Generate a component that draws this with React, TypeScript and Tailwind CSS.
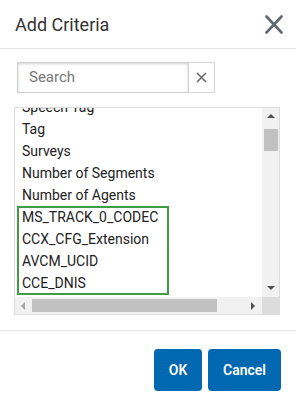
import React from 'react';

const font = { fontFamily: 'Roboto, "Liberation Sans", Arial, sans-serif' };

// items visible in the criteria list (first one is scrolled half out of view)
const before = ['Speech Tag', 'Tag', 'Surveys', 'Number of Segments', 'Number of Agents'];
const picked = ['MS_TRACK_0_CODEC', 'CCX_CFG_Extension', 'AVCM_UCID', 'CCE_DNIS'];

const Row: React.FC<{ text: string }> = ({ text }) => (
  <div className="h-[22px] leading-[22px] pl-[7px] whitespace-nowrap text-[14px] text-[#222]">{text}</div>
);

const Arrow: React.FC<{ dir: 'up' | 'down' | 'left' | 'right'; light?: boolean }> = ({ dir, light }) => {
  const pts = {
    up: '1,6 5,2 9,6',
    down: '1,2 5,6 9,2',
    left: '6,1 2,5 6,9',
    right: '2,1 6,5 2,9',
  }[dir];
  return (
    <svg width="10" height="10" viewBox="0 0 10 10" className="block">
      <polygon points={pts} fill={light ? '#a3a3a3' : '#505050'} />
    </svg>
  );
};

const App: React.FC = () => {
  return (
    <div className="w-[296px] h-[406px] bg-white flex flex-col" style={font}>
      {/* header */}
      <div className="h-[49px] border-b border-[#e3e3e3] flex items-center justify-between pl-[15px] pr-[13px]">
        <h2 className="text-[18px] text-[#333] font-normal">Add Criteria</h2>
        <button className="w-[18px] h-[20px] flex items-center justify-center">
          <svg width="18" height="19" viewBox="0 0 18 19">
            <path d="M1.5 1.5 L16.5 17.5 M16.5 1.5 L1.5 17.5" stroke="#5e6a71" strokeWidth="2.6" strokeLinecap="round" />
          </svg>
        </button>
      </div>

      {/* body */}
      <div className="pt-[13px] pl-[14px] pr-[17px]">
        <div className="ml-[3px] w-[198px] h-[31px] flex">
          <div className="flex-1 border border-[#d0d0d0] shadow-[inset_0_1px_3px_rgba(0,0,0,0.18)] flex items-center pl-[11px] text-[15px] text-[#777]">
            Search
          </div>
          <button className="w-[26px] border border-l-0 border-[#d6d6d6] flex items-center justify-center">
            <svg width="11" height="11" viewBox="0 0 11 11">
              <path d="M1 1 L10 10 M10 1 L1 10" stroke="#666" strokeWidth="1.5" />
            </svg>
          </button>
        </div>

        <div className="mt-[14px] w-[266px] h-[208px] border border-[#dcdcdc] flex flex-col">
          <div className="flex flex-1 min-h-0">
            <div className="relative flex-1 overflow-hidden">
              <div className="-mt-[12px]">
                {before.map((t) => (
                  <Row key={t} text={t} />
                ))}
                {picked.map((t) => (
                  <Row key={t} text={t} />
                ))}
              </div>
              {/* highlight box around the newly added fields */}
              <div className="absolute left-[2px] top-[98px] w-[152px] h-[89px] border-2 border-[#3f9c45]" />
            </div>
            <div className="w-[17px] bg-[#f1f1f1] flex flex-col items-center">
              <div className="h-[17px] flex items-center justify-center">
                <Arrow dir="up" />
              </div>
              <div className="mt-[4px] w-[14px] h-[22px] bg-[#c1c1c1]" />
              <div className="flex-1" />
              <div className="h-[17px] flex items-center justify-center">
                <Arrow dir="down" />
              </div>
            </div>
          </div>
          <div className="h-[17px] flex bg-[#f1f1f1]">
            <div className="w-[17px] flex items-center justify-center">
              <Arrow dir="left" light />
            </div>
            <div className="flex-1 flex items-center">
              <div className="w-[185px] h-[13px] bg-[#c1c1c1]" />
            </div>
            <div className="w-[17px] flex items-center justify-center">
              <Arrow dir="right" />
            </div>
            <div className="w-[17px] bg-[#dcdcdc]" />
          </div>
        </div>
      </div>

      {/* footer */}
      <div className="mt-[15px] border-t border-[#e3e3e3] pt-[18px] pr-[15px] flex justify-end gap-[6px]">
        <button className="w-[48px] h-[42px] rounded-[4px] bg-[#0067b1] text-white text-[14px] font-semibold">OK</button>
        <button className="w-[73px] h-[42px] rounded-[4px] bg-[#0067b1] text-white text-[14px] font-semibold">Cancel</button>
      </div>
    </div>
  );
};

export default App;
